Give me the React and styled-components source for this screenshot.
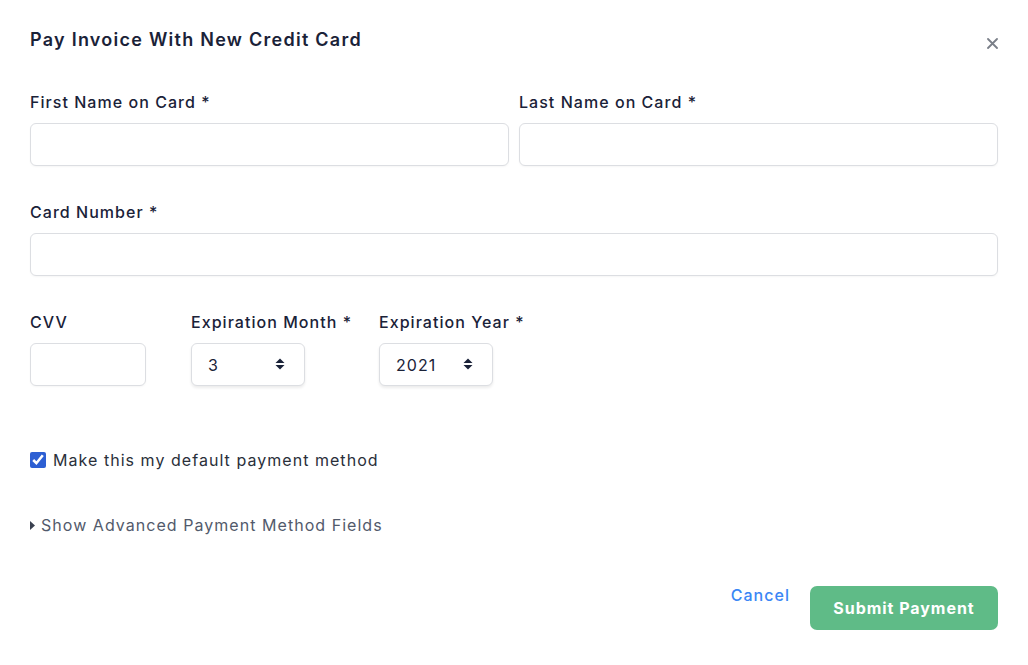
import styled, { createGlobalStyle } from "styled-components";

const GlobalStyle = createGlobalStyle`
  body {
    margin: 0;
    background: #ffffff;
    font-family: Inter, "Liberation Sans", sans-serif;
    color: #1a2238;
    letter-spacing: 0.065em;
  }
`;

const Modal = styled.div`
  width: 1028px;
  height: 665px;
  box-sizing: border-box;
  padding: 28px 30px 0 30px;
  background: #fff;
`;

const Header = styled.div`
  display: flex;
  justify-content: space-between;
  align-items: flex-start;
  height: 24px;
  margin-bottom: 40px;
`;

const Title = styled.h2`
  margin: 0;
  font-size: 18px;
  line-height: 24px;
  font-weight: 600;
  color: #1a2238;
  letter-spacing: 0.07em;
`;

const Close = styled.button`
  border: none;
  background: none;
  padding: 0;
  margin: 7px -2px 0 0;
  width: 16px;
  height: 16px;
  display: flex;
  align-items: center;
  justify-content: center;
  cursor: pointer;
`;

const Row = styled.div`
  display: flex;
  gap: ${(p) => p.$gap ?? 10}px;
  margin-bottom: 36px;
`;

const Field = styled.div`
  display: flex;
  flex-direction: column;
  flex: ${(p) => (p.$w ? "none" : 1)};
  width: ${(p) => (p.$w ? p.$w + "px" : "auto")};
`;

const Label = styled.label`
  font-size: 16px;
  line-height: 20px;
  font-weight: 500;
  color: #1a2238;
  margin-bottom: 11px;
  white-space: nowrap;
`;

const Input = styled.input`
  box-sizing: border-box;
  width: ${(p) => (p.$w ? p.$w + "px" : "100%")};
  height: 43px;
  border: 1px solid #dcdee2;
  border-radius: 6px;
  box-shadow: 0 1px 2px rgba(0, 0, 0, 0.04);
  padding: 0 14px;
  font-family: inherit;
  font-size: 16px;
  outline: none;
`;

const SelectWrap = styled.div`
  position: relative;
  width: ${(p) => p.$w}px;
`;

const Select = styled.select`
  appearance: none;
  -webkit-appearance: none;
  box-sizing: border-box;
  width: 100%;
  height: 43px;
  border: 1px solid #dcdee2;
  border-radius: 6px;
  box-shadow: 0 2px 3px rgba(0, 0, 0, 0.08);
  background: #fff;
  padding: 0 16px;
  font-family: inherit;
  font-size: 16px;
  letter-spacing: 0.065em;
  color: #1a2238;
  outline: none;
`;

const Caret = styled.svg`
  position: absolute;
  right: 20px;
  top: 15px;
  pointer-events: none;
`;

const CheckRow = styled.label`
  display: flex;
  align-items: center;
  gap: 7px;
  margin-top: 64px;
  font-size: 16px;
  line-height: 20px;
  color: #2a2f3a;
`;

const Check = styled.input`
  margin: 0;
  width: 16px;
  height: 16px;
  accent-color: #2d5fd3;
`;

const Toggle = styled.div`
  display: flex;
  align-items: center;
  gap: 6px;
  margin-top: 45px;
  font-size: 16px;
  line-height: 20px;
  color: #525a6b;
  cursor: pointer;
`;

const Footer = styled.div`
  display: flex;
  justify-content: flex-end;
  align-items: flex-start;
  gap: 20px;
  margin-top: 51px;
`;

const CancelLink = styled.a`
  font-size: 16px;
  line-height: 20px;
  font-weight: 500;
  color: #3a86f5;
  text-decoration: none;
  margin-top: -1px;
  cursor: pointer;
`;

const SubmitButton = styled.button`
  width: 188px;
  height: 44px;
  border: none;
  border-radius: 7px;
  background: #5fbb87;
  color: #fff;
  font-family: inherit;
  font-size: 16px;
  font-weight: 700;
  letter-spacing: 0.06em;
  cursor: pointer;
`;

const UpDown = () => (
  <Caret width="10" height="12" viewBox="0 0 10 12">
    <path d="M5 0.5 L9.5 5 H0.5 Z" fill="#1a2238" />
    <path d="M5 11.5 L9.5 7 H0.5 Z" fill="#1a2238" />
  </Caret>
);

export default function App() {
  return (
    <Modal>
      <GlobalStyle />
      <Header>
        <Title>Pay Invoice With New Credit Card</Title>
        <Close aria-label="Close">
          <svg width="11" height="11" viewBox="0 0 11 11">
            <path d="M1 1 L10 10 M10 1 L1 10" stroke="#7a7f88" strokeWidth="1.8" strokeLinecap="round" />
          </svg>
        </Close>
      </Header>

      <Row>
        <Field>
          <Label>First Name on Card *</Label>
          <Input />
        </Field>
        <Field>
          <Label>Last Name on Card *</Label>
          <Input />
        </Field>
      </Row>

      <Row>
        <Field>
          <Label>Card Number *</Label>
          <Input />
        </Field>
      </Row>

      <Row $gap={0}>
        <Field $w={161}>
          <Label>CVV</Label>
          <Input $w={116} />
        </Field>
        <Field $w={188}>
          <Label>Expiration Month *</Label>
          <SelectWrap $w={114}>
            <Select defaultValue="3">
              {Array.from({ length: 12 }, (_, i) => (
                <option key={i} value={String(i + 1)}>{i + 1}</option>
              ))}
            </Select>
            <UpDown />
          </SelectWrap>
        </Field>
        <Field $w={160}>
          <Label>Expiration Year *</Label>
          <SelectWrap $w={114}>
            <Select defaultValue="2021">
              {[2021, 2022, 2023, 2024, 2025, 2026].map((y) => (
                <option key={y} value={String(y)}>{y}</option>
              ))}
            </Select>
            <UpDown />
          </SelectWrap>
        </Field>
      </Row>

      <CheckRow>
        <Check type="checkbox" defaultChecked />
        Make this my default payment method
      </CheckRow>

      <Toggle>
        <svg width="5" height="9" viewBox="0 0 5 9">
          <path d="M0 0 L5 4.5 L0 9 Z" fill="#3a4150" />
        </svg>
        Show Advanced Payment Method Fields
      </Toggle>

      <Footer>
        <CancelLink>Cancel</CancelLink>
        <SubmitButton>Submit Payment</SubmitButton>
      </Footer>
    </Modal>
  );
}
